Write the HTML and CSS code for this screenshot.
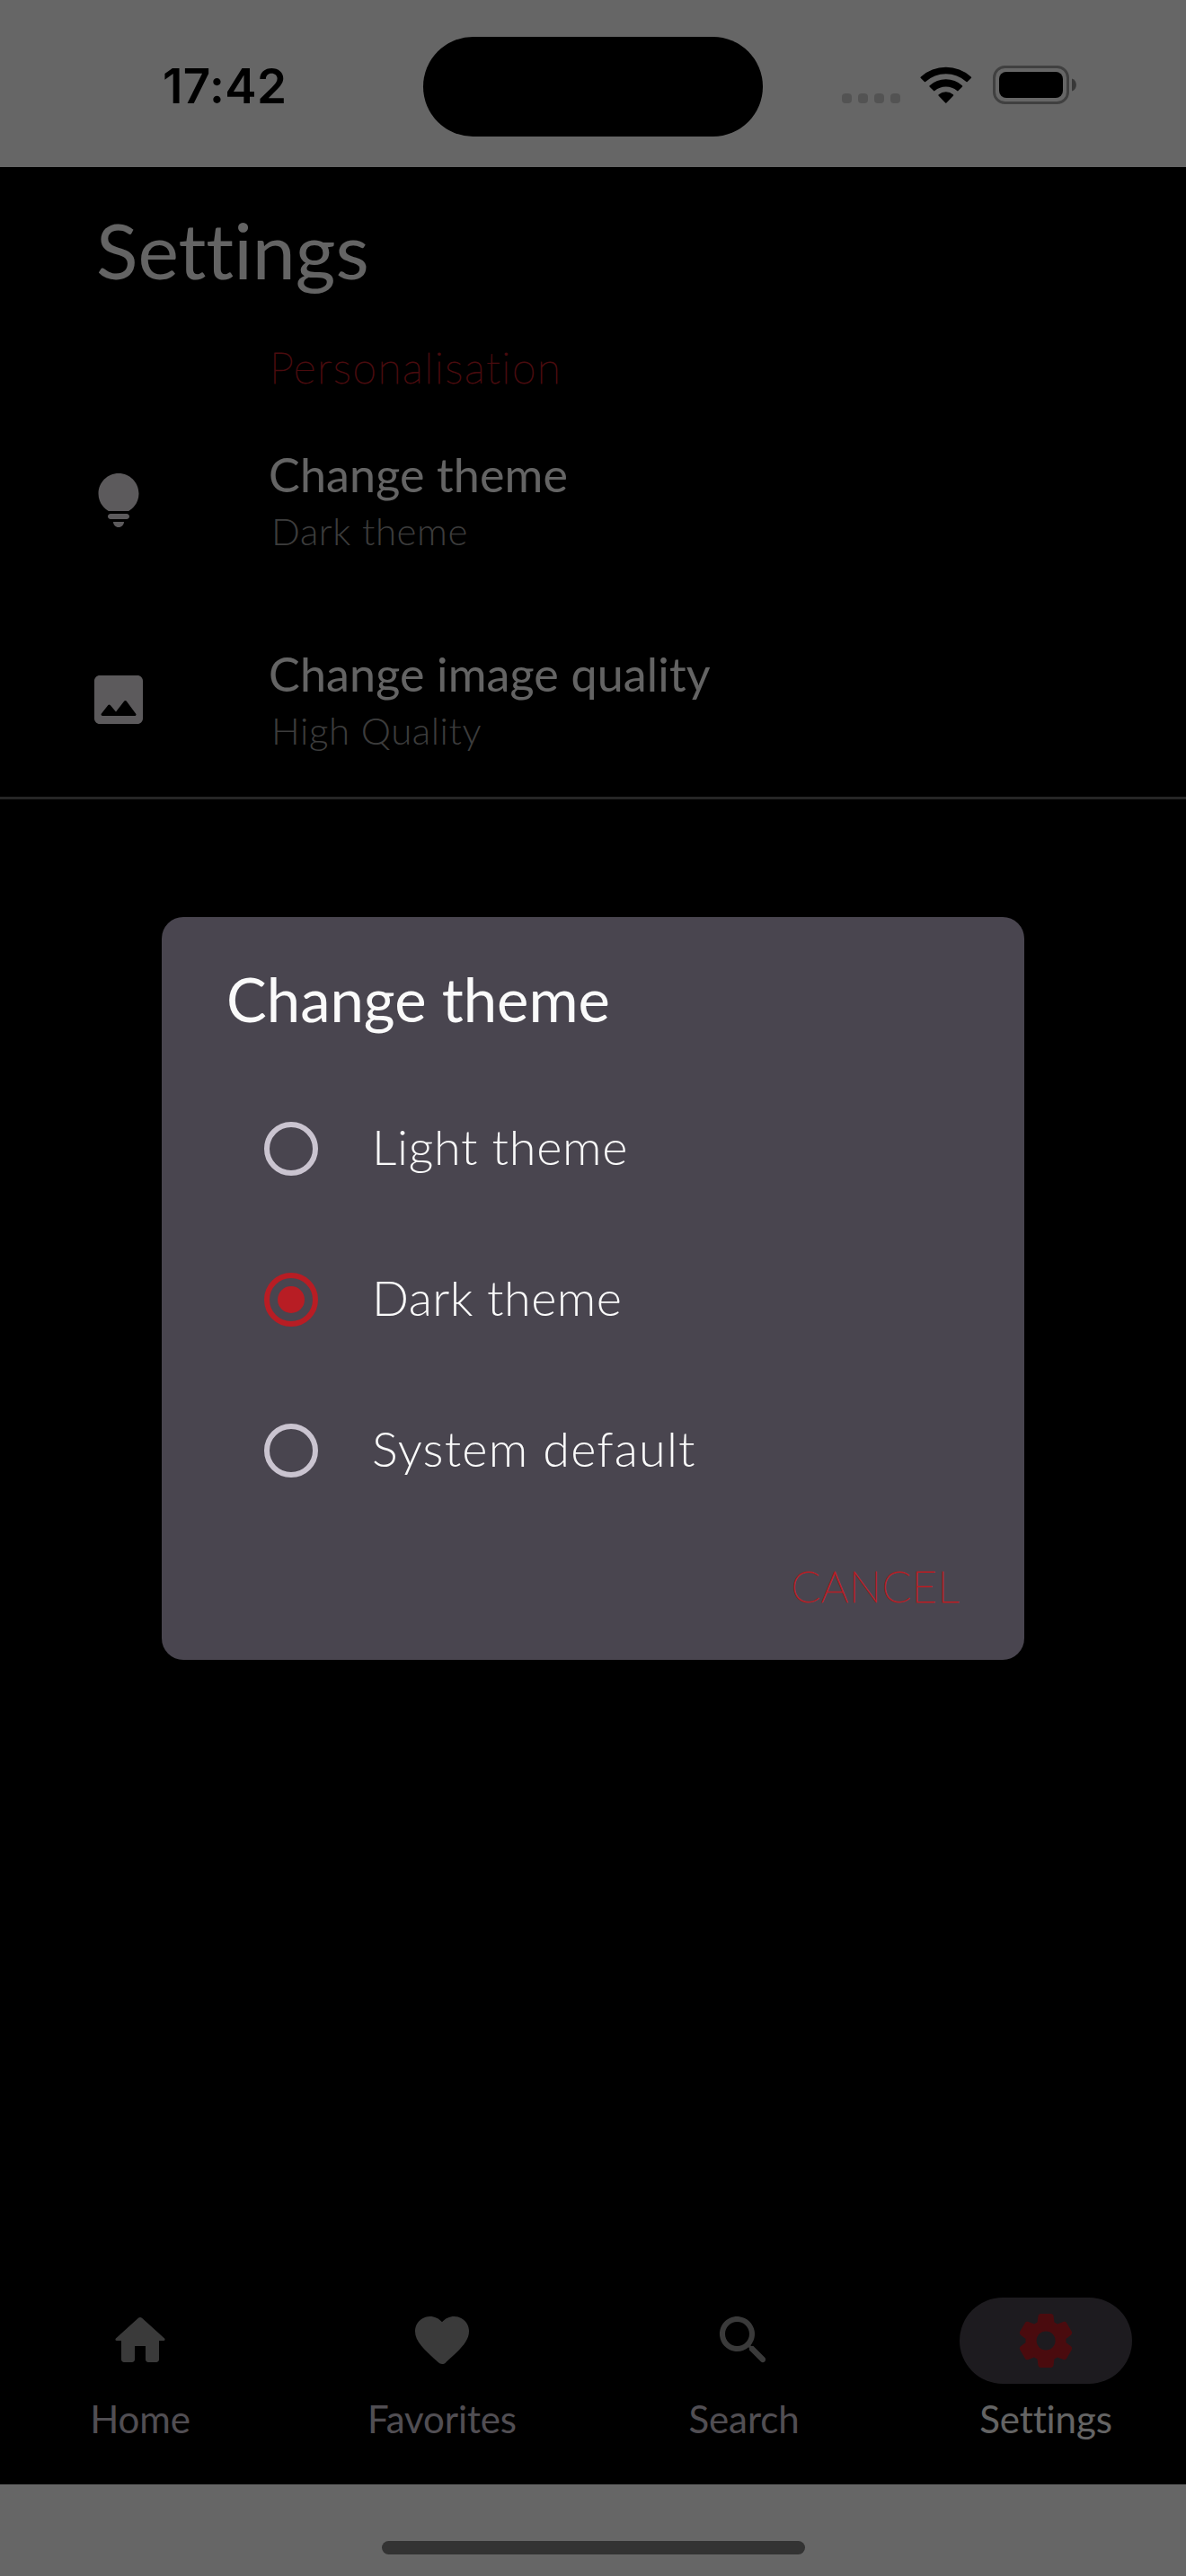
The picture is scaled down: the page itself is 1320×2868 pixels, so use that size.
FILE: index.html
```html
<!DOCTYPE html>
<html lang="en">
<head>
<meta charset="utf-8">
<title>Settings</title>
<link rel="stylesheet" href="styles.css">
</head>
<body>
<div class="screen">
  <header class="status-bar">
    <div class="time">17:42</div>
    <div class="island"></div>
    <div class="indicators">
      <div class="cell-dots"><i></i><i></i><i></i><i></i></div>
      <svg class="wifi" viewBox="0 0 58 43">
        <path d="M.9 12.4A42 42 0 0 1 56.7 12.4Q57.6 13.200 56.800 14L52.700 18.100Q52.200 18.600 51.500 18A34 34 0 0 0 6.100 18Q5.400 18.600 4.900 18.100L.8 14Q0 13.200.9 12.400Z"/>
        <path d="M10.700 22.200A27 27 0 0 1 46.900 22.200Q47.700 23 46.900 23.700L42.500 28.100Q41.900 28.700 41.200 28.100A19 19 0 0 0 16.400 28.100Q15.700 28.700 15.100 28.100L10.700 23.700Q9.900 23 10.700 22.200Z"/>
        <path d="M20.700 32.200A13 13 0 0 1 36.900 32.200Q37.700 33 36.900 33.800L29.400 41.400Q28.800 42 28.200 41.400L20.700 33.800Q19.900 33 20.700 32.200Z"/>
      </svg>
      <svg class="battery" viewBox="0 0 94 43">
        <rect x="1.500" y="1.500" width="82" height="40" rx="12" fill="none" stroke="#a0a0a0" stroke-width="3"/>
        <rect x="7" y="7" width="71" height="29" rx="8"/>
        <path d="M88 14.500C94.500 16.500 94.500 26.500 88 28.500Z" fill="#8c8c8c"/>
      </svg>
    </div>
  </header>

  <main class="content">
    <h1 class="page-title">Settings</h1>
    <h2 class="section-title">Personalisation</h2>
    <div class="setting">
      <svg class="setting-icon" viewBox="0 0 24 24"><path d="M12 22c1.100 0 2-.9 2-2h-4c0 1.100.9 2 2 2zm-3-3h6c.55 0 1-.45 1-1s-.45-1-1-1H9c-.55 0-1 .45-1 1s.45 1 1 1zm3-17C7.860 2 4.500 5.360 4.500 9.500c0 3.820 2.660 5.860 3.770 6.500h7.460c1.110-.64 3.770-2.680 3.770-6.500C19.500 5.360 16.140 2 12 2z"/></svg>
      <div class="setting-text">
        <div class="setting-name">Change theme</div>
        <div class="setting-value">Dark theme</div>
      </div>
    </div>
    <div class="setting">
      <svg class="setting-icon" viewBox="0 0 24 24"><path d="M21 19V5c0-1.100-.9-2-2-2H5c-1.100 0-2 .9-2 2v14c0 1.100.9 2 2 2h14c1.100 0 2-.9 2-2zM8.900 13.980l2.100 2.530 3.100-3.990c.2-.26.6-.26.8.01l3.510 4.680c.25.33.01.8-.4.8H6.020c-.42 0-.65-.48-.39-.81L8.120 14c.19-.26.57-.27.78-.02z"/></svg>
      <div class="setting-text">
        <div class="setting-name">Change image quality</div>
        <div class="setting-value">High Quality</div>
      </div>
    </div>
    <div class="divider"></div>
  </main>

  <nav class="tabs">
    <div class="tab">
      <div class="pill"><svg viewBox="0 0 24 24"><path d="M10 19v-5h4v5c0 .55.45 1 1 1h3c.55 0 1-.45 1-1v-7h1.700c.46 0 .68-.57.33-.87L12.670 3.600c-.38-.34-.96-.34-1.340 0l-8.360 7.530c-.34.3-.13.87.33.87H5v7c0 .55.45 1 1 1h3c.55 0 1-.45 1-1z"/></svg></div>
      <span>Home</span>
    </div>
    <div class="tab">
      <div class="pill"><svg viewBox="0 0 24 24"><path d="M13.350 20.130c-.76.69-1.930.69-2.690-.01l-.11-.1C5.300 15.270 1.870 12.160 2 8.280c.06-1.700.93-3.330 2.340-4.290 2.640-1.800 5.900-.96 7.660 1.100 1.760-2.060 5.020-2.910 7.660-1.100 1.410.96 2.280 2.590 2.340 4.290.14 3.880-3.300 6.990-8.550 11.760l-.1.09z"/></svg></div>
      <span>Favorites</span>
    </div>
    <div class="tab">
      <div class="pill"><svg viewBox="0 0 24 24"><path d="M15.500 14h-.79l-.28-.27c1.200-1.400 1.820-3.310 1.480-5.340-.47-2.780-2.790-5-5.590-5.340-4.230-.52-7.790 3.040-7.270 7.270.34 2.800 2.560 5.120 5.340 5.590 2.030.34 3.940-.28 5.340-1.480l.27.28v.79l4.250 4.250c.41.41 1.080.41 1.490 0 .41-.41.41-1.080 0-1.490L15.500 14zm-6 0C7.010 14 5 11.990 5 9.500S7.010 5 9.500 5 14 7.010 14 9.500 11.990 14 9.500 14z"/></svg></div>
      <span>Search</span>
    </div>
    <div class="tab active">
      <div class="pill"><svg viewBox="0 0 24 24"><path d="M19.500 12c0-.23-.01-.45-.03-.68l1.860-1.410c.4-.3.51-.86.26-1.300l-1.870-3.230c-.25-.44-.79-.62-1.250-.42l-2.150.91c-.37-.26-.76-.49-1.170-.68l-.29-2.310c-.06-.5-.49-.88-.99-.88h-3.730c-.51 0-.94.38-1 .88l-.29 2.310c-.41.19-.8.42-1.170.68l-2.150-.91c-.46-.2-1-.02-1.250.42L2.410 8.620c-.25.44-.14.99.26 1.300l1.860 1.410c-.02.22-.03.44-.03.67s.01.45.03.68l-1.860 1.410c-.4.3-.51.86-.26 1.300l1.870 3.230c.25.44.79.62 1.250.42l2.150-.91c.37.26.76.49 1.170.68l.29 2.310c.06.5.49.88.99.88h3.730c.5 0 .93-.38.99-.88l.29-2.310c.41-.19.8-.42 1.170-.68l2.150.91c.46.2 1 .02 1.250-.42l1.870-3.230c.25-.44.14-.99-.26-1.300l-1.860-1.410c.03-.23.04-.45.04-.68zm-7.460 3.500c-1.930 0-3.500-1.570-3.500-3.500s1.570-3.500 3.500-3.500 3.500 1.570 3.500 3.500-1.570 3.500-3.500 3.500z"/></svg></div>
      <span>Settings</span>
    </div>
  </nav>

  <footer class="home-area"><div class="home-indicator"></div></footer>

  <div class="scrim">
    <section class="dialog" role="dialog">
      <h2 class="dialog-title">Change theme</h2>
      <div class="option"><span class="radio"></span><span class="option-label light">Light theme</span></div>
      <div class="option"><span class="radio checked"></span><span class="option-label">Dark theme</span></div>
      <div class="option"><span class="radio"></span><span class="option-label system">System default</span></div>
      <div class="cancel">CANCEL</div>
    </section>
  </div>
</div>
</body>
</html>
```
FILE: styles.css
```css
* { box-sizing: border-box; }

body {
  margin: 0;
  background: #000;
  font-family: Lato, "Noto Sans", sans-serif;
  font-variant-ligatures: none;
}

h1, h2 { margin: 0; font-weight: 400; }
svg { display: block; fill: currentColor; flex: none; }

.screen {
  position: relative;
  display: flex;
  flex-direction: column;
  width: 1320px;
  height: 2868px;
  overflow: hidden;
  background: #000;
}

/* Status bar */
.status-bar {
  display: grid;
  grid-template-columns: 471px 378px 1fr;
  height: 186px;
  background: #fff;
  color: #000;
}
.time {
  padding: 64px 0 0 181px;
  font: 600 53px/64px Inter, sans-serif;
  letter-spacing: 0.4px;
}
.island {
  height: 111px;
  margin-top: 41px;
  border-radius: 56px;
  background: #000;
}
.indicators {
  display: flex;
  align-items: flex-start;
  padding: 73px 0 0 88px;
}
.cell-dots {
  display: flex;
  gap: 7px;
  padding-top: 31px;
  margin-right: 22px;
}
.cell-dots i {
  width: 11px;
  height: 11px;
  border-radius: 4px;
  background: #d0d0d0;
}
.wifi { width: 58px; height: 43px; margin-right: 23px; }
.battery { width: 94px; height: 43px; }

/* Settings list */
.content { flex: 1; padding-top: 42px; }
.page-title {
  padding-left: 107px;
  font-size: 86px;
  line-height: 100px;
  color: #fafafa;
}
.section-title {
  margin: 52px 0 8px;
  padding-left: 300px;
  font-size: 48px;
  line-height: 58px;
  font-weight: 100;
  letter-spacing: 1.55px;
  color: #b81d24;
  -webkit-text-stroke: 0.8px #b81d24;
}
.setting {
  display: flex;
  align-items: center;
  gap: 131px;
  height: 222px;
  padding-left: 96px;
}
.setting-icon { width: 72px; height: 72px; color: #e6e1e5; }
.setting-text { padding-bottom: 1px; }
.setting-name {
  font-size: 52px;
  line-height: 64px;
  letter-spacing: 0.15px;
  color: #fafafa;
}
.setting-value {
  margin-top: 5px;
  padding-left: 3px;
  font-size: 42px;
  line-height: 52px;
  font-weight: 300;
  letter-spacing: 0.6px;
  color: #979797;
}
.divider { height: 3px; margin-top: -3px; background: #606060; }

/* Bottom navigation */
.tabs {
  display: flex;
  justify-content: space-between;
  padding: 0 60px 46px;
}
.tab {
  display: flex;
  flex-direction: column;
  align-items: center;
  gap: 12px;
  width: 192px;
  font-size: 42px;
  line-height: 54px;
  letter-spacing: -0.1px;
  color: #cac4d0;
}
.pill {
  display: flex;
  align-items: center;
  justify-content: center;
  width: 192px;
  height: 96px;
  border-radius: 48px;
  color: #919191;
}
.pill svg { width: 72px; height: 72px; }
.active { color: #fafafa; }
.active .pill { background: #49454f; color: #b81d24; }

.home-area {
  display: flex;
  justify-content: center;
  height: 102px;
  padding-top: 63px;
  background: #fff;
}
.home-indicator {
  width: 471px;
  height: 15px;
  border-radius: 8px;
  background: #7f7f7f;
}

/* Theme dialog */
.scrim {
  position: absolute;
  inset: 0;
  display: flex;
  align-items: center;
  justify-content: center;
  background: rgba(0, 0, 0, 0.6);
}
.dialog {
  width: 960px;
  height: 827px;
  padding: 51px 72px 0;
  border-radius: 24px;
  background: #49454f;
  color: #fafafa;
}
.dialog-title {
  margin-bottom: 43px;
  font-size: 67px;
  line-height: 80px;
}
.option {
  display: flex;
  align-items: center;
  gap: 60px;
  height: 168px;
  padding-left: 42px;
}
.radio {
  display: flex;
  align-items: center;
  justify-content: center;
  width: 60px;
  height: 60px;
  border: 6px solid #cac4d0;
  border-radius: 50%;
}
.checked { border-color: #b81d24; }
.checked::after {
  content: "";
  width: 30px;
  height: 30px;
  border-radius: 50%;
  background: #b81d24;
}
.option-label {
  padding-bottom: 4px;
  font-size: 54px;
  line-height: 66px;
  font-weight: 300;
  letter-spacing: 0.45px;
}
.light { letter-spacing: 0.7px; }
.system { letter-spacing: 1.2px; }
.cancel {
  margin-top: 38px;
  text-align: right;
  font-size: 48px;
  line-height: 58px;
  font-weight: 100;
  letter-spacing: 0.6px;
  color: #b81d24;
  -webkit-text-stroke: 0.8px #b81d24;
}
```
